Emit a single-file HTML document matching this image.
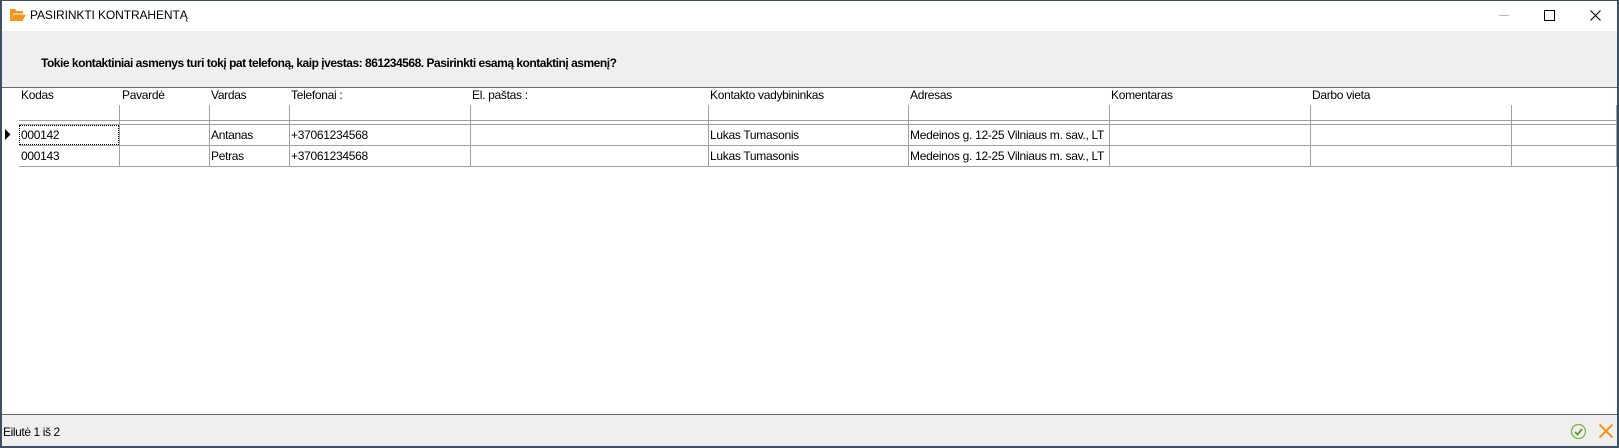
<!DOCTYPE html>
<html><head><meta charset="utf-8"><style>
*{margin:0;padding:0;box-sizing:border-box}
body{width:1619px;height:448px;position:relative;overflow:hidden;background:#fff;font-family:"Liberation Sans",sans-serif;font-size:12px;color:#000}
.a{position:absolute}
.t{position:absolute;white-space:nowrap;line-height:14px;letter-spacing:-0.3px}
.h{background:#a0a0a0}
</style></head><body>
<div class="a" style="left:0;top:0;width:1619px;height:448px;border:1px solid #3e4f60;border-left-width:2px;border-right-width:2px;border-bottom-width:2px"></div>
<svg class="a" style="left:9px;top:8px" width="17" height="14" viewBox="0 0 17 14"><path d="M1 1h5l1.5 2H14v2.5H4.5L1 13z" fill="#f7941d"/><path d="M4.5 6.5H17l-3.5 6.5H1z" fill="#f7941d"/></svg>
<div class="t" style="left:30px;top:8px;font-size:12px;letter-spacing:-0.1px">PASIRINKTI KONTRAHENTĄ</div>
<div class="a" style="left:1499px;top:15px;width:10px;height:1px;background:#bbb"></div>
<div class="a" style="left:1544px;top:10px;width:11px;height:11px;border:1px solid #000"></div>
<svg class="a" style="left:1590px;top:10px" width="11" height="11"><path d="M0.5 0.5L10.5 10.5M10.5 0.5L0.5 10.5" stroke="#000" stroke-width="1.1"/></svg>
<div class="a" style="left:2px;top:31px;width:1615px;height:56px;background:#efefef"></div>
<div class="t" style="left:41px;top:56px;font-weight:bold;font-size:12px;letter-spacing:-0.48px">Tokie kontaktiniai asmenys turi tokį pat telefoną, kaip įvestas: 861234568. Pasirinkti esamą kontaktinį asmenį?</div>
<div class="a" style="left:2px;top:87px;width:1615px;height:1px;background:#696969"></div>
<div class="t" style="left:21px;top:88px">Kodas</div>
<div class="t" style="left:122px;top:88px">Pavardė</div>
<div class="t" style="left:211px;top:88px">Vardas</div>
<div class="t" style="left:291px;top:88px">Telefonai :</div>
<div class="t" style="left:472px;top:88px">El. paštas :</div>
<div class="t" style="left:710px;top:88px">Kontakto vadybininkas</div>
<div class="t" style="left:910px;top:88px">Adresas</div>
<div class="t" style="left:1111px;top:88px">Komentaras</div>
<div class="t" style="left:1312px;top:88px">Darbo vieta</div>
<div class="a h" style="left:19px;top:120px;width:1598px;height:1px"></div>
<div class="a h" style="left:19px;top:124px;width:1598px;height:1px"></div>
<div class="a h" style="left:19px;top:145px;width:1598px;height:1px"></div>
<div class="a h" style="left:19px;top:166px;width:1598px;height:1px"></div>
<div class="a h" style="left:1616px;top:105px;width:1px;height:62px"></div>
<div class="a h" style="left:119px;top:105px;width:1px;height:62px"></div>
<div class="a h" style="left:209px;top:105px;width:1px;height:62px"></div>
<div class="a h" style="left:289px;top:105px;width:1px;height:62px"></div>
<div class="a h" style="left:470px;top:105px;width:1px;height:62px"></div>
<div class="a h" style="left:708px;top:105px;width:1px;height:62px"></div>
<div class="a h" style="left:908px;top:105px;width:1px;height:62px"></div>
<div class="a h" style="left:1109px;top:105px;width:1px;height:62px"></div>
<div class="a h" style="left:1310px;top:105px;width:1px;height:62px"></div>
<div class="a h" style="left:1511px;top:105px;width:1px;height:62px"></div>
<div class="a" style="left:19px;top:125px;width:100px;height:20px;border:1px dotted #000"></div>
<svg class="a" style="left:5px;top:129px" width="6" height="11"><path d="M0 0L5.5 5.5L0 11z" fill="#000"/></svg>
<div class="t" style="left:21px;top:128px">000142</div>
<div class="t" style="left:211px;top:128px">Antanas</div>
<div class="t" style="left:291px;top:128px">+37061234568</div>
<div class="t" style="left:710px;top:128px">Lukas Tumasonis</div>
<div class="t" style="left:910px;top:128px">Medeinos g. 12-25 Vilniaus m. sav., LT</div>
<div class="t" style="left:21px;top:149px">000143</div>
<div class="t" style="left:211px;top:149px">Petras</div>
<div class="t" style="left:291px;top:149px">+37061234568</div>
<div class="t" style="left:710px;top:149px">Lukas Tumasonis</div>
<div class="t" style="left:910px;top:149px">Medeinos g. 12-25 Vilniaus m. sav., LT</div>
<div class="a" style="left:2px;top:414px;width:1615px;height:1px;background:#696969"></div>
<div class="a" style="left:2px;top:415px;width:1615px;height:31px;background:#efefef"></div>
<div class="t" style="left:3px;top:425px;letter-spacing:-0.4px">Eilutė 1 iš 2</div>
<svg class="a" style="left:1570px;top:423px" width="17" height="17"><circle cx="8.5" cy="8.5" r="7" fill="none" stroke="#7cb342" stroke-width="1.3"/><path d="M5 9l2.5 2.5L12 6" fill="none" stroke="#5d9b2a" stroke-width="1.8"/></svg>
<svg class="a" style="left:1598px;top:423px" width="16" height="16"><path d="M1.5 1.5L14.5 14.5M14.5 1.5L1.5 14.5" stroke="#f7941d" stroke-width="2"/></svg>
</body></html>
